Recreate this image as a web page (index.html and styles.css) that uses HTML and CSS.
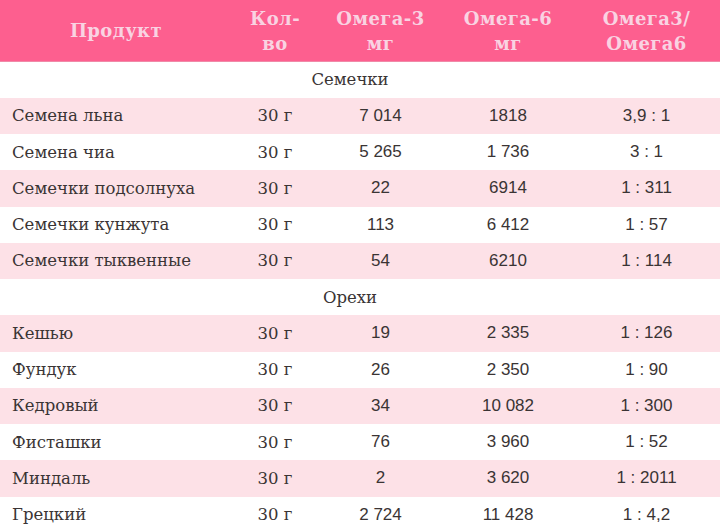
FILE: index.html
```html
<!DOCTYPE html>
<html lang="ru">
<head>
<meta charset="utf-8">
<link rel="stylesheet" href="styles.css">
</head>
<body>
<table class="omega">
  <colgroup>
    <col class="c-name"><col class="c-qty"><col class="c-o3"><col class="c-o6"><col class="c-ratio">
  </colgroup>
  <thead>
    <tr>
      <th>Продукт</th>
      <th>Кол-<br>во</th>
      <th>Омега-3<br>мг</th>
      <th>Омега-6<br>мг</th>
      <th>Омега3/<br>Омега6</th>
    </tr>
  </thead>
  <tbody>
    <tr class="group"><td colspan="5">Семечки</td></tr>
    <tr class="alt"><td>Семена льна</td><td>30 г</td><td class="n">7 014</td><td class="n">1818</td><td class="n">3,9 : 1</td></tr>
    <tr><td>Семена чиа</td><td>30 г</td><td class="n">5 265</td><td class="n">1 736</td><td class="n">3 : 1</td></tr>
    <tr class="alt"><td>Семечки подсолнуха</td><td>30 г</td><td class="n">22</td><td class="n">6914</td><td class="n">1 : 311</td></tr>
    <tr><td>Семечки кунжута</td><td>30 г</td><td class="n">113</td><td class="n">6 412</td><td class="n">1 : 57</td></tr>
    <tr class="alt"><td>Семечки тыквенные</td><td>30 г</td><td class="n">54</td><td class="n">6210</td><td class="n">1 : 114</td></tr>
    <tr class="group"><td colspan="5">Орехи</td></tr>
    <tr class="alt"><td>Кешью</td><td>30 г</td><td class="n">19</td><td class="n">2 335</td><td class="n">1 : 126</td></tr>
    <tr><td>Фундук</td><td>30 г</td><td class="n">26</td><td class="n">2 350</td><td class="n">1 : 90</td></tr>
    <tr class="alt"><td>Кедровый</td><td>30 г</td><td class="n">34</td><td class="n">10 082</td><td class="n">1 : 300</td></tr>
    <tr><td>Фисташки</td><td>30 г</td><td class="n">76</td><td class="n">3 960</td><td class="n">1 : 52</td></tr>
    <tr class="alt"><td>Миндаль</td><td>30 г</td><td class="n">2</td><td class="n">3 620</td><td class="n">1 : 2011</td></tr>
    <tr><td>Грецкий</td><td>30 г</td><td class="n">2 724</td><td class="n">11 428</td><td class="n">1 : 4,2</td></tr>
  </tbody>
</table>
</body>
</html>
```

FILE: styles.css
```css
html, body {
  margin: 0;
  padding: 0;
  background: #ffffff;
}

.omega {
  width: 720px;
  border-collapse: collapse;
  table-layout: fixed;
  font-family: "DejaVu Serif", "Liberation Serif", serif;
  font-size: 16.5px;
  color: #3a3434;
}

.c-name { width: 232px; }
.c-qty { width: 86px; }
.c-o3 { width: 125px; }
.c-o6 { width: 130px; }
.c-ratio { width: 147px; }

.omega thead tr {
  background: #fd5f8f;
  border-bottom: 1px solid #f08aa8;
}

.omega th {
  height: 61px;
  padding: 0;
  font-weight: bold;
  font-size: 18px;
  line-height: 25px;
  color: #f9d3e2;
  text-align: center;
  letter-spacing: 0.4px;
}

.omega tbody tr {
  height: 36.25px;
}

.omega td {
  padding: 0;
  text-align: center;
}

.omega td:first-child {
  text-align: left;
  padding-left: 12px;
}

.omega tr.group td {
  text-align: center;
  padding-left: 0;
  padding-right: 20px;
}

.omega tr.alt {
  background: #fde1e7;
}

.omega td.n {
  font-family: "Liberation Sans", "Open Sans", sans-serif;
  font-size: 17px;
}
```
